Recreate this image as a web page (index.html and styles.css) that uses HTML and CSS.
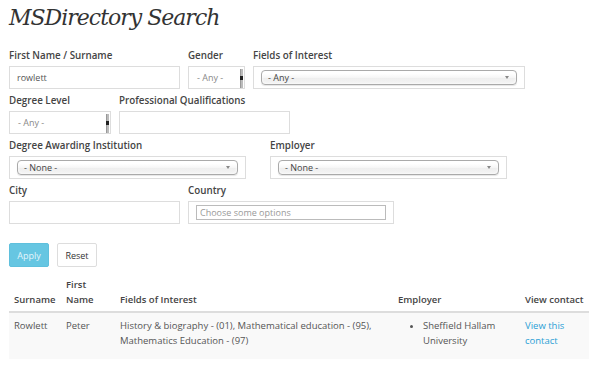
FILE: index.html
```html
<!DOCTYPE html>
<html lang="en">
<head>
    <meta charset="UTF-8">
    <meta name="viewport" content="width=device-width, initial-scale=1.0">
    <title>MSDirectory Search</title>
    <link rel="stylesheet" href="styles.css">
</head>
<body>
    <div class="container">
        <h1>MSDirectory Search</h1>
        <form id="search-form" method="GET" action="">
            <div class="form-row">
                <div class="field">
                    <label for="name">First Name / Surname</label>
                    <input type="text" id="name" class="text-input w-name" value="rowlett">
                </div>
                <div class="field">
                    <label>Gender</label>
                    <div class="native-select w-gender">
                        <span class="native-value">- Any -</span>
                        <span class="native-arrow"></span>
                    </div>
                </div>
                <div class="field">
                    <label>Fields of Interest</label>
                    <div class="chosen-box w-fields">
                        <div class="chosen-single"><span>- Any -</span><b></b></div>
                    </div>
                </div>
            </div>
            <div class="form-row">
                <div class="field">
                    <label>Degree Level</label>
                    <div class="native-select w-degree">
                        <span class="native-value">- Any -</span>
                        <span class="native-arrow"></span>
                    </div>
                </div>
                <div class="field">
                    <label for="quals">Professional Qualifications</label>
                    <input type="text" id="quals" class="text-input w-name">
                </div>
            </div>
            <div class="form-row wide-gap">
                <div class="field">
                    <label>Degree Awarding Institution</label>
                    <div class="chosen-box w-inst">
                        <div class="chosen-single"><span>- None -</span><b></b></div>
                    </div>
                </div>
                <div class="field">
                    <label>Employer</label>
                    <div class="chosen-box w-inst">
                        <div class="chosen-single"><span>- None -</span><b></b></div>
                    </div>
                </div>
            </div>
            <div class="form-row">
                <div class="field">
                    <label for="city">City</label>
                    <input type="text" id="city" class="text-input w-name">
                </div>
                <div class="field">
                    <label>Country</label>
                    <div class="chosen-box w-country">
                        <input type="text" class="chosen-search" placeholder="Choose some options">
                    </div>
                </div>
            </div>
            <div class="actions">
                <button type="submit" class="btn btn-apply">Apply</button>
                <button type="reset" class="btn btn-reset">Reset</button>
            </div>
        </form>

        <table class="results">
            <colgroup>
                <col class="c-surname">
                <col class="c-first">
                <col class="c-fields">
                <col class="c-employer">
                <col class="c-contact">
            </colgroup>
            <thead>
                <tr>
                    <th>Surname</th>
                    <th>First Name</th>
                    <th>Fields of Interest</th>
                    <th>Employer</th>
                    <th>View contact</th>
                </tr>
            </thead>
            <tbody>
                <tr>
                    <td>Rowlett</td>
                    <td>Peter</td>
                    <td>History &amp; biography - (01), Mathematical education - (95), Mathematics Education - (97)</td>
                    <td>
                        <ul class="employers">
                            <li>Sheffield Hallam University</li>
                        </ul>
                    </td>
                    <td><a href="#">View this contact</a></td>
                </tr>
            </tbody>
        </table>
    </div>
</body>
</html>
```

FILE: styles.css
```css
body {
    margin: 0;
    font-family: "Open Sans", Arial, sans-serif;
    font-size: 9.5px;
    color: #555;
    background: #fff;
}

.container {
    padding: 2px 11px 0 9px;
}

h1 {
    margin: 0 0 10px;
    font-family: "DejaVu Serif", Georgia, serif;
    font-style: italic;
    font-weight: normal;
    font-size: 22px;
    letter-spacing: -1px;
    line-height: 32px;
    color: #333;
}

/* form */

.form-row {
    display: flex;
    gap: 8px;
}

.form-row.wide-gap {
    gap: 24px;
}

.field label {
    display: block;
    margin: 4px 0 2px;
    line-height: 16px;
    font-size: 9.8px;
    font-weight: 600;
    color: #444;
}

.text-input {
    box-sizing: border-box;
    display: block;
    height: 23px;
    margin: 0;
    padding: 0 7px;
    border: 1px solid #ddd;
    font-family: inherit;
    font-size: 9px;
    color: #555;
}

.w-name { width: 171px; }
.w-gender { width: 57px; }
.w-degree { width: 102px; }
.w-fields { width: 272px; }
.w-inst { width: 237px; }
.w-country { width: 206px; }

.native-select {
    box-sizing: border-box;
    display: flex;
    align-items: center;
    height: 23px;
    border: 1px solid #ddd;
    font-size: 9px;
    color: #888;
}

.native-value {
    flex: 1;
    padding-left: 8px;
}

.native-arrow {
    align-self: flex-end;
    position: relative;
    width: 2px;
    height: 19px;
    margin-right: 1px;
    background: #bbb;
    border-left: 1px solid #999;
}

.native-arrow::after {
    content: "";
    position: absolute;
    left: -1px;
    top: 7px;
    width: 3px;
    height: 4px;
    background: #222;
}

.chosen-box {
    box-sizing: border-box;
    height: 23px;
    padding: 3px 7px;
    border: 1px solid #ddd;
}

.chosen-single {
    box-sizing: border-box;
    display: flex;
    align-items: center;
    justify-content: space-between;
    height: 15px;
    padding: 0 7px 0 6px;
    border: 1px solid #aaa;
    border-radius: 4px;
    background: linear-gradient(#fff 20%, #f6f6f6 50%, #eee 52%, #f4f4f4 100%);
    box-shadow: inset 0 0 3px #fff, 0 1px 1px rgba(0, 0, 0, 0.1);
    font-size: 9px;
    color: #444;
}

.chosen-single b {
    width: 0;
    height: 0;
    border-left: 2.5px solid transparent;
    border-right: 2.5px solid transparent;
    border-top: 3px solid #888;
}

.chosen-search {
    box-sizing: border-box;
    display: block;
    width: 100%;
    height: 15px;
    margin: 0;
    padding: 0 3px;
    border: 1px solid #bbb;
    font-family: inherit;
    font-size: 9px;
    color: #555;
}

.chosen-search::placeholder {
    color: #999;
}

.actions {
    display: flex;
    gap: 8px;
    margin-top: 19px;
}

.btn {
    box-sizing: border-box;
    width: 40px;
    height: 24px;
    padding: 0;
    border-radius: 2px;
    font-family: inherit;
    font-size: 9px;
    cursor: pointer;
}

.btn-apply {
    background: #66c6e2;
    border: 1px solid #5fc0dd;
    color: #e4f5fb;
}

.btn-reset {
    background: #fff;
    border: 1px solid #ddd;
    color: #333;
}

/* results */

.results {
    width: 580px;
    margin-top: 8px;
    border-collapse: collapse;
    table-layout: fixed;
}

.c-surname { width: 52px; }
.c-first { width: 54px; }
.c-fields { width: 278px; }
.c-employer { width: 127px; }
.c-contact { width: 69px; }

.results th {
    padding: 2px 5px 4px;
    border-bottom: 2px solid #ddd;
    text-align: left;
    vertical-align: bottom;
    font-weight: 600;
    line-height: 15px;
    color: #444;
}

.results td {
    padding: 5px 5px;
    vertical-align: top;
    line-height: 15px;
    background: #f9f9f9;
}

.employers {
    margin: 0 0 6px;
    padding-left: 25px;
}

.results a {
    color: #2a9fd6;
    text-decoration: none;
}
```
